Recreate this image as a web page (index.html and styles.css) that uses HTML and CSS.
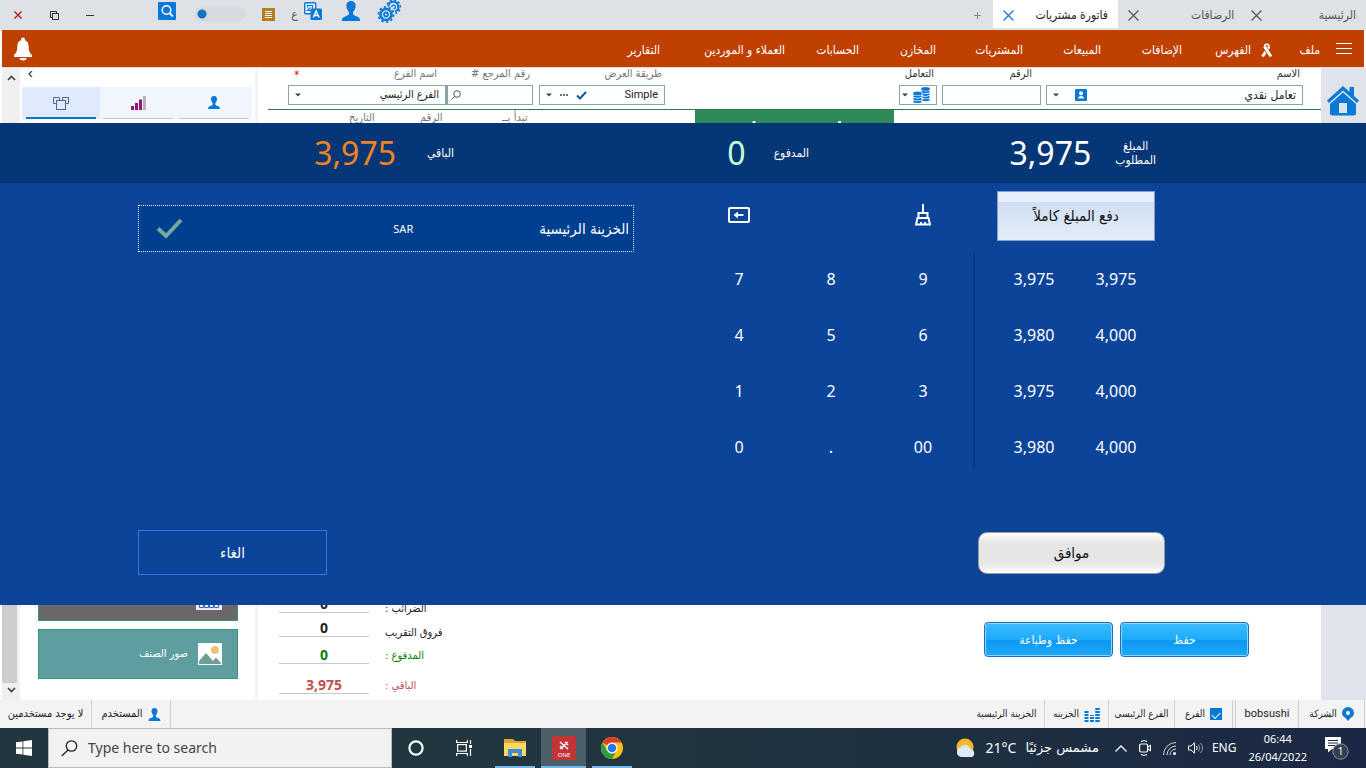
FILE: index.html
```html
<!DOCTYPE html>
<html lang="ar">
<head>
<meta charset="utf-8">
<title>فاتورة مشتريات</title>
<link rel="stylesheet" href="styles.css">
</head>
<body>
<svg width="0" height="0" class="defs" aria-hidden="true">
  <symbol id="person" viewBox="0 0 18 20"><path d="M9 0C5.800 0 4.200 2.300 4.400 5.300C4.600 7.700 5.600 9.600 6.900 10.800C7.200 12.500 7 13.800 5.500 14.500L1.500 16.300C.3 17 0 18.500 0 20H18C18 18.500 17.700 17 16.500 16.300L12.500 14.500C11 13.800 10.800 12.500 11.100 10.800C12.400 9.600 13.400 7.700 13.600 5.300C13.800 2.300 12.200 0 9 0Z" fill="#0a78d6"/></symbol>
  <symbol id="caret" viewBox="0 0 6 4"><path d="M0 .5H6L3 3.500Z" fill="#444"/></symbol>
  <symbol id="cross" viewBox="0 0 10 10"><path d="M.5.5L9.500 9.500M9.500.5L.5 9.500" stroke="currentColor" stroke-width="1.100"/></symbol>
</svg>

<header class="titlebar">
  <div class="window-buttons">
    <button class="win win-close" aria-label="إغلاق"><svg width="8" height="8" viewBox="0 0 8 8"><path d="M.5.5L7.500 7.500M7.500.5L.5 7.500" stroke="#b3272b" stroke-width="1.500"/></svg></button>
    <button class="win" aria-label="استعادة"><svg width="9" height="9" viewBox="0 0 9 9" fill="none" stroke="#333"><path d="M2.500 6.500H.5V.5H6.500V2.500"/><rect x="2.500" y="2.500" width="6" height="6"/></svg></button>
    <button class="win" aria-label="تصغير"><svg width="8" height="1" viewBox="0 0 8 1"><path d="M0 .5H8" stroke="#333"/></svg></button>
  </div>
  <div class="tools">
    <button class="tool tool-search" aria-label="بحث"><svg width="18" height="18" viewBox="0 0 18 18"><rect width="18" height="18" rx="1" fill="#0a78d6"/><circle cx="8.500" cy="8" r="4.300" fill="none" stroke="#fff" stroke-width="1.500"/><path d="M11.500 11L15 14.500" stroke="#fff" stroke-width="1.800"/></svg></button>
    <input class="switch" type="checkbox" aria-label="تبديل">
    <button class="tool tool-list" aria-label="قائمة"><svg width="13" height="13" viewBox="0 0 13 13"><rect width="13" height="13" fill="#b57e1b"/><path d="M3 3.500H10M3 5.500H10M3 7.500H10M3 9.500H10" stroke="#fff"/></svg></button>
    <button class="tool lang">ع</button>
    <button class="tool" aria-label="ترجمة"><svg width="18" height="18" viewBox="0 0 18 18"><rect x=".7" y=".7" width="11" height="11" rx="1" fill="#e8f2fa" stroke="#0a78d6" stroke-width="1.400"/><path d="M3.500 5.500V3.500H8.500V8.500H3.500L6.500 5.500" fill="none" stroke="#0a78d6" stroke-width="1.200"/><rect x="6.500" y="6.500" width="11.500" height="11.500" rx="1.500" fill="#0a78d6"/><path d="M9.300 15.500L12.200 9L15.100 15.500M10.300 13.500H14.100" fill="none" stroke="#fff" stroke-width="1.400"/></svg></button>
    <button class="tool tool-user" aria-label="المستخدم"><svg width="18" height="20"><use href="#person"/></svg></button>
    <button class="tool tool-gear" aria-label="الإعدادات"><svg width="24" height="23" viewBox="0 0 24 23" fill="none" stroke="#0a78d6"><circle cx="9" cy="14.500" r="5.500" stroke-width="2.600"/><circle cx="9" cy="14.500" r="7.600" stroke-width="1.800" stroke-dasharray="2.400 2.370"/><circle cx="9" cy="14.500" r="2" stroke-width="1.800"/><path d="M11.300 6.500A5 5 0 1 1 18 11.500" stroke-width="2"/><path d="M10.300 4.500A6.700 6.700 0 1 1 18.500 13.300" stroke-width="1.800" stroke-dasharray="2.200 2"/><path d="M14.800 7A1.800 1.800 0 1 1 16.500 8.700" stroke-width="1.400"/></svg></button>
  </div>
  <nav class="tabs" dir="rtl">
    <button class="tab tab-home">الرئيسية</button>
    <div class="tab tab-second"><button class="x" aria-label="إغلاق الرئيسية"><svg width="11" height="11"><use href="#cross"/></svg></button><button class="tab-name">الرضافات</button></div>
    <button class="x" aria-label="إغلاق الرضافات"><svg width="11" height="11"><use href="#cross"/></svg></button>
    <div class="tab tab-active"><button class="tab-name">فاتورة مشتريات</button><button class="x" aria-label="إغلاق فاتورة مشتريات"><svg width="11" height="11"><use href="#cross"/></svg></button></div>
    <button class="plus" aria-label="جديد"><svg width="7" height="7" viewBox="0 0 7 7"><path d="M3.500 0V7M0 3.500H7" stroke="#888"/></svg></button>
  </nav>
</header>

<nav class="menubar" dir="rtl">
  <button class="hamburger" aria-label="القائمة"><svg width="16" height="11" viewBox="0 0 16 11"><path d="M0 .5H16M0 5.500H16M0 10.500H16" stroke="#fff"/></svg></button>
  <button>ملف</button>
  <button class="with-icon"><svg width="13" height="15" viewBox="0 0 13 15" fill="none" stroke="#fff"><path d="M8.800 4.500C9.300 2.200 8.500 1.300 6.800 1.300S4.200 2.400 4.800 4.200" stroke-width="1.600"/><path d="M9 4L2.500 13.500" stroke-width="3"/><path d="M4.600 4L11 13.500" stroke="#bf4000" stroke-width="4.200"/><path d="M4.500 3.500L11 13.500" stroke-width="3"/></svg>الفهرس</button>
  <button>الإضافات</button>
  <button>المبيعات</button>
  <button>المشتريات</button>
  <button>المخازن</button>
  <button>الحسابات</button>
  <button>العملاء و الموردين</button>
  <button>التقارير</button>
  <button class="bell" aria-label="التنبيهات"><svg width="20" height="24" viewBox="0 0 20 24" fill="#fff"><circle cx="10" cy="2.500" r="2"/><path d="M10 3C5.500 3 4.500 6 4.300 10C4.100 14 3.500 16 1 18V20H19V18C16.500 16 15.900 14 15.700 10C15.500 6 14.500 3 10 3ZM6.500 21A3.500 2.500 0 0 0 13.500 21Z"/></svg></button>
</nav>

<main class="workspace">
  <div class="scroll">
    <svg width="9" height="6" viewBox="0 0 9 6"><path d="M1 5L4.500 1.500L8 5" fill="none" stroke="#444" stroke-width="1.700"/></svg>
    <div class="thumb"></div>
    <svg width="9" height="6" viewBox="0 0 9 6"><path d="M1 1L4.500 4.500L8 1" fill="none" stroke="#444" stroke-width="1.700"/></svg>
  </div>

  <aside class="side">
    <button class="collapse" aria-label="طي"><svg width="5" height="6" viewBox="0 0 5 6"><path d="M4 0L1 3L4 6" fill="none" stroke="#444" stroke-width="1.300"/></svg></button>
    <div class="side-tabs">
      <button class="side-tab selected" aria-label="العرض"><svg width="16" height="13" viewBox="0 0 16 13" fill="none" stroke="#4a6a8c"><path d="M3 6.500H.5V.5H6.500V3M9.500 3V.5H15.500V6.500H13"/><rect x="3.500" y="3.500" width="9" height="9"/></svg></button>
      <button class="side-tab" aria-label="إحصائيات"><svg width="15" height="14" viewBox="0 0 15 14"><path d="M0 10H3V14H0ZM4 7H7V14H4ZM8 3.500H11V14H8Z" fill="#9b1379"/><path d="M12 0H15V14H12Z" fill="#bcaec0"/></svg></button>
      <button class="side-tab" aria-label="العميل"><svg width="12" height="13"><use href="#person"/></svg></button>
    </div>
    <div class="tiles" dir="rtl">
      <button class="tile tile-dark" aria-label="حاسبة"><svg width="26" height="24" viewBox="0 0 26 24"><rect width="26" height="24" fill="#e7ecfb"/><path d="M3.500 17.500H7.500V21.500H3.500ZM8.500 17.500H12.500V21.500H8.500ZM13.500 17.500H17.500V21.500H13.500ZM18.500 17.500H22.500V21.500H18.500Z" fill="none" stroke="#3c63c8"/></svg></button>
      <button class="tile tile-teal"><svg width="24" height="22" viewBox="0 0 24 22"><rect width="24" height="22" fill="#fff"/><circle cx="17" cy="7" r="4" fill="#efc07a"/><path d="M1 21V18L8 10L15 18L18 14.500L23 20V21Z" fill="#6d9f92"/></svg><span>صور الصنف</span></button>
    </div>
  </aside>

  <section class="form">
    <div class="fields">
      <div class="field f-branch" dir="rtl">
        <div class="label-row"><label for="branch">اسم الفرع</label><b>*</b></div>
        <div class="control"><select id="branch"><option>الفرع الرئيسي</option></select><svg width="6" height="4"><use href="#caret"/></svg></div>
      </div>
      <div class="field f-ref" dir="rtl">
        <label for="ref">رقم المرجع #</label>
        <div class="control"><input id="ref" type="text"><svg width="10" height="10" viewBox="0 0 10 10" fill="none" stroke="#555"><circle cx="6" cy="4" r="3.300"/><path d="M3.500 6.500L.5 9.500"/></svg></div>
      </div>
      <div class="field f-view" dir="rtl">
        <label for="view">طريقة العرض</label>
        <div class="control"><select id="view"><option>Simple</option></select><svg width="11" height="9" viewBox="0 0 11 9"><path d="M1 4.500L4 7.500L10 1" fill="none" stroke="#17569b" stroke-width="2"/></svg><svg width="8" height="2" viewBox="0 0 8 2"><path d="M0 1H2M3 1H5M6 1H8" stroke="#444" stroke-width="1.500"/></svg><svg width="6" height="4"><use href="#caret"/></svg></div>
      </div>
      <div class="field f-deal dark" dir="rtl">
        <label for="deal">التعامل</label>
        <div class="control"><select id="deal" class="empty-select"><option></option></select><svg width="17" height="16" viewBox="0 0 17 16" fill="none" stroke="#0a78d6" stroke-width="1.900"><ellipse cx="12.500" cy="2" rx="3.500" ry="1"/><path d="M8.500 4.500Q12.500 6.300 16.500 4.500M9.500 7.200Q13 8.800 16.500 7M9.500 10Q13 11.500 16.500 9.700M9.500 12.700Q13 14 16.500 12.400"/><ellipse cx="4.500" cy="6.500" rx="3.500" ry="1"/><path d="M.5 9Q4.500 10.800 8.500 9M.5 11.700Q4.500 13.500 8.500 11.700M.5 14.300Q4.500 16 8.500 14.300"/></svg><svg width="6" height="4"><use href="#caret"/></svg></div>
      </div>
      <div class="field f-number dark" dir="rtl">
        <label for="number">الرقم</label>
        <div class="control"><input id="number" type="text"></div>
      </div>
      <div class="field f-name dark" dir="rtl">
        <label for="name">الاسم</label>
        <div class="control"><select id="name"><option>تعامل نقدي</option></select><svg class="card" width="12" height="12" viewBox="0 0 12 12"><rect width="12" height="12" rx="1" fill="#0a78d6"/><circle cx="6" cy="4.200" r="2" fill="#fff"/><path d="M3 9.500Q3 7.500 6 6.500Q9 7.500 9 9.500Z" fill="#fff"/></svg><svg width="6" height="4"><use href="#caret"/></svg></div>
      </div>
    </div>
    <div class="subhead">
      <span>التاريخ</span><span>الرقم</span><span>تبدأ بــ</span>
      <h1>فاتورة مشتريات</h1>
    </div>
    <div class="bottom">
      <dl class="totals">
        <dd>0</dd><dt class="low" dir="rtl">الضرائب :</dt>
        <dd>0</dd><dt class="low" dir="rtl">فروق التقريب</dt>
        <dd class="green">0</dd><dt class="green" dir="rtl">المدفوع :</dt>
        <dd class="red">3,975</dd><dt class="red" dir="rtl">الباقي :</dt>
      </dl>
      <div class="save-buttons"><button>حفظ وطباعة</button><button>حفظ</button></div>
    </div>
  </section>

  <aside class="home-strip"><button aria-label="الرئيسية"><svg width="32" height="31" viewBox="0 0 32 31" fill="#0a78d6"><path d="M0 15.500L16 1L22.500 7V2H27V11L32 15.500L30 18L16 5.500L2 18Z"/><path d="M3 19L16 7.500L29 19V28Q29 30.500 26.500 30.500H5.500Q3 30.500 3 28Z"/><rect x="12" y="18" width="8" height="10" fill="#dfe3ea"/></svg></button></aside>

  <section class="payment" role="dialog" aria-label="الدفع">
    <div class="summary">
      <div class="sum sum-rest"><output>3,975</output><span>الباقي</span></div>
      <div class="sum sum-paid"><output>0</output><span>المدفوع</span></div>
      <div class="sum sum-due"><output>3,975</output><span>المبلغ<br>المطلوب</span></div>
    </div>
    <div class="pay-body">
      <button class="treasury" dir="rtl"><span class="treasury-name">الخزينة الرئيسية</span><span class="currency">SAR</span><svg width="28" height="22" viewBox="0 0 28 22"><path d="M2 10.500L10 18L25 2" fill="none" stroke="#74ab9c" stroke-width="4"/></svg></button>
      <div class="keypad">
        <button class="key key-top" aria-label="مسح رقم"><svg width="22" height="16" viewBox="0 0 22 16"><rect x="1" y="1" width="20" height="14" rx="1" fill="none" stroke="#fff" stroke-width="2"/><path d="M7 8H15.500" stroke="#fff" stroke-width="2"/><path d="M5.500 8L10 4.500V11.500Z" fill="#fff"/></svg></button>
        <span></span>
        <button class="key key-top" aria-label="مسح الكل"><svg width="16" height="22" viewBox="0 0 16 22" fill="none" stroke="#fff" stroke-width="2"><path d="M8 0V9M3.500 14V9H12.500V14M2.500 14H13.500L15 20.500H1ZM6 20V18M10 20V18"/></svg></button>
        <button class="key">7</button><button class="key">8</button><button class="key">9</button>
        <button class="key">4</button><button class="key">5</button><button class="key">6</button>
        <button class="key">1</button><button class="key">2</button><button class="key">3</button>
        <button class="key">0</button><button class="key">.</button><button class="key">00</button>
      </div>
      <div class="amounts">
        <div class="full-row"><button class="full" dir="rtl">دفع المبلغ كاملاً</button></div>
        <div class="amount-grid">
          <button class="key">3,975</button><button class="key">3,975</button>
          <button class="key">3,980</button><button class="key">4,000</button>
          <button class="key">3,975</button><button class="key">4,000</button>
          <button class="key">3,980</button><button class="key">4,000</button>
        </div>
      </div>
    </div>
    <div class="pay-actions"><button class="cancel">الغاء</button><button class="ok">موافق</button></div>
  </section>
</main>

<footer class="statusbar">
  <span class="cell c-users">لا يوجد مستخدمين</span>
  <span class="cell c-user">المستخدم<svg width="13" height="13"><use href="#person"/></svg></span>
  <span class="grow"></span>
  <span class="cell c-safe-name">الخزينة الرئيسية</span>
  <span class="cell c-safe">الخزينه<svg width="16" height="15" viewBox="0 0 16 15" fill="none" stroke="#0a78d6" stroke-dasharray="2 1"><path d="M2.500 15V3M8 15V8" stroke-width="4"/><path d="M13.500 15V0" stroke-width="4.500"/></svg></span>
  <span class="cell c-branch-name">الفرع الرئيسى</span>
  <span class="cell c-branch"><label for="branch-on">الفرع</label><input id="branch-on" type="checkbox" checked></span>
  <span class="cell c-company-name">bobsushi</span>
  <span class="cell c-company">الشركة<svg width="12" height="14" viewBox="0 0 12 14"><path d="M6 0A6 6 0 0 1 12 6Q12 9 8.500 11L6 14L3.500 11Q0 9 0 6A6 6 0 0 1 6 0Z" fill="#0a78d6"/><circle cx="6" cy="6" r="2" fill="#fff"/></svg></span>
</footer>

<footer class="taskbar" lang="en">
  <button class="start" aria-label="Start"><svg width="16" height="16" viewBox="0 0 16 16" fill="#fff"><path d="M0 2.300L6.500 1.400V7.600H0ZM7.300 1.300L16 0V7.600H7.300ZM0 8.400H6.500V14.600L0 13.700ZM7.300 8.400H16V16L7.300 14.700Z"/></svg></button>
  <label class="search"><svg width="17" height="17" viewBox="0 0 17 17" fill="none" stroke="#222" stroke-width="1.300"><circle cx="10.500" cy="6" r="5.200"/><path d="M7 10L.7 16"/></svg><input type="text" placeholder="Type here to search" aria-label="Type here to search"></label>
  <button class="task" aria-label="Cortana"><svg width="16" height="16" viewBox="0 0 16 16"><circle cx="8" cy="8" r="6.600" fill="none" stroke="#fff" stroke-width="2.200"/></svg></button>
  <button class="task" aria-label="Task view"><svg width="17" height="16" viewBox="0 0 17 16" fill="none" stroke="#fff" stroke-width="1.200"><path d="M.6 0V2.500H11.400V0M.6 16V13.500H11.400V16M14.500 0V4M14.500 9V16"/><rect x="1.600" y="4.600" width="8.800" height="6.500"/><path d="M13 6.500H16" stroke-width="3"/></svg></button>
  <div class="apps">
    <button class="task app" aria-label="Explorer"><svg width="22" height="18" viewBox="0 0 22 18"><path d="M0 0H9L11 2H22V17H0Z" fill="#e0a42e"/><path d="M0 4H22V17H0Z" fill="#fbd768"/><path d="M4 18V10H18V18H14V14H8V18Z" fill="#3c8fd3"/></svg></button>
    <button class="task app active" aria-label="ONE"><svg width="24" height="24" viewBox="0 0 24 24"><rect width="24" height="24" rx="1" fill="#c23436"/><path d="M8 6L16 13M8 10L11 13M13 6L16 9M16 6L8 13" stroke="#fff" stroke-width="1.400"/><text x="12" y="21" fill="#fff" font-size="6" text-anchor="middle">ONE</text></svg></button>
    <button class="task app" aria-label="Chrome"><svg width="22" height="22" viewBox="0 0 22 22"><circle cx="11" cy="11" r="11" fill="#fbc116"/><path d="M11 11L1.500 5.500A11 11 0 0 1 20.500 5.500H11Z" fill="#df3c2f"/><path d="M11 22A11 11 0 0 1 1.500 5.500L6.200 13.700L11 16L15 14.500Z" fill="#2d9b48"/><circle cx="11" cy="11" r="5.500" fill="#fff"/><circle cx="11" cy="11" r="4.300" fill="#2f77e5"/></svg></button>
  </div>
  <span class="grow"></span>
  <button class="weather"><svg width="22" height="20" viewBox="0 0 22 20"><circle cx="10" cy="9" r="8.500" fill="#f9b92c"/><path d="M6 19A5 5 0 0 1 5 9.500A6 6 0 0 1 15.500 11A4.300 4.300 0 0 1 17 19Z" fill="#dcebf8"/></svg><span>21°C</span><span class="weather-text" dir="rtl">مشمس جزئيًا</span></button>
  <div class="tray">
    <svg width="12" height="7" viewBox="0 0 12 7"><path d="M.5 6.500L6 1L11.500 6.500" fill="none" stroke="#fff" stroke-width="1.300"/></svg>
    <svg width="12" height="16" viewBox="0 0 12 16" fill="none" stroke="#fff" stroke-width="1.200"><rect x=".6" y="4" width="8" height="8" rx="1.500"/><path d="M8.600 7L11.500 5.500V10.500L8.600 9M2 1.500Q5 0 8 1.500M2 14.500Q5 16 8 14.500"/></svg>
    <svg width="13" height="13" viewBox="0 0 13 13" fill="none" stroke="#cdd3da"><path d="M.5 13A12.500 12.500 0 0 1 13 .5M4 13A9 9 0 0 1 13 4M7 13A6 6 0 0 1 13 7"/><circle cx="11.500" cy="11.500" r="1.500" fill="#fff" stroke="none"/></svg>
    <svg width="16" height="12" viewBox="0 0 16 12" fill="none" stroke="#fff"><path d="M.5 4H3L6.500 .8V11.200L3 8H.5Z"/><path d="M8.500 4Q10 6 8.500 8"/><path d="M10.500 2.500Q13 6 10.500 9.500M12.500 1Q16.500 6 12.500 11" stroke="#8b97a5"/></svg>
  </div>
  <span class="eng">ENG</span>
  <time class="clock">06:44<br>26/04/2022</time>
  <button class="notify" aria-label="Notifications"><svg width="24" height="24" viewBox="0 0 24 24"><path d="M0 1H16V13H7L3 16.500V13H0Z" fill="#fff"/><path d="M3 4.500H13M3 7H13M3 9.500H10" stroke="#1d2b3e"/><circle cx="15.500" cy="15.500" r="7.700" fill="#33404d" stroke="#8d949c"/><text x="15.500" y="19" fill="#fff" font-size="10" text-anchor="middle">1</text></svg></button>
</footer>
</body>
</html>
```
FILE: styles.css
```css
* { box-sizing: border-box; }

body {
  margin: 0;
  min-height: 100vh;
  display: flex;
  flex-direction: column;
  font: 11px/14px "DejaVu Sans Condensed", "DejaVu Sans", sans-serif;
  color: #222;
  background: #fff;
}

button, input, select {
  font: inherit;
  color: inherit;
  margin: 0;
  padding: 0;
  border: 0;
  background: none;
}

svg { display: block; flex: none; }
.defs { position: absolute; }
.grow { flex: 1; }
.green { color: #0b800b; }
.red { color: #c0504d; }

/* Title bar */
.titlebar {
  height: 30px;
  display: flex;
  background: #dee1e6;
}
.window-buttons { display: flex; align-items: center; }
.win { width: 36px; height: 30px; display: grid; place-items: center; }
.tools { display: flex; align-items: center; margin-left: 50px; height: 22px; }
.switch {
  appearance: none;
  width: 50px;
  height: 16px;
  margin: 6px 17px 0 19px;
  border-radius: 8px;
  background: radial-gradient(circle at 7px 8px, #1173c4 4px, transparent 5px), #d6dae1;
}
.tool-list { padding-top: 6px; }
.lang { margin: 6px 6px 0 16px; width: 7px; font-size: 12px; color: #555; }
.tool-user { margin-left: 20px; }
.tool-gear { margin-left: 17px; }
.tabs { display: flex; margin-left: auto; color: #555; font-size: 12px; }
.tabs button { display: flex; align-items: center; white-space: nowrap; }
.tab { height: 30px; display: flex; align-items: center; justify-content: space-between; }
.tab-home { padding-right: 10px; width: 104px; }
.tab-second { width: 71px; margin-left: 52px; }
.tabs > .x { margin-left: 10px; }
.tab-active {
  width: 125px;
  height: 28px;
  padding: 2px 10px 0;
  background: #fff;
  color: #222;
}
.tab-active .x { color: #1173c4; }
.plus { padding: 0 12px; }

/* Menu bar */
.menubar {
  height: 38px;
  margin: 0 2px;
  padding: 3px 12px 0 11px;
  display: grid;
  grid-template-columns: 32px 47px 91px 81px 78px 87px 77px 74px 125px 1fr auto;
  align-items: center;
  background: #bf4000;
  color: #fff;
  border-bottom: 1px solid #f0d8cb;
  font-size: 12px;
}
.menubar button { text-align: right; white-space: nowrap; }
.menubar .with-icon { display: flex; align-items: center; gap: 9px; }
.hamburger, .bell { padding-bottom: 3px; }

/* Workspace */
.workspace {
  position: relative;
  flex: 1;
  min-height: 560px;
  display: flex;
}
.scroll {
  width: 18px;
  margin-left: 2px;
  padding: 7px 0;
  display: flex;
  flex-direction: column;
  align-items: center;
  gap: 4px;
  background: #f0f0f0;
}
.thumb { flex: 1; width: 15px; margin: 90px 3px 0 0; background: #cdcdcd; }
.side {
  width: 238px;
  display: flex;
  flex-direction: column;
  padding: 0 3px 21px 2px;
  border-right: 3px solid #f3f4f6;
}
.collapse { width: 18px; height: 19px; padding: 3px 0 0 6px; display: flex; align-items: flex-start; }
.side-tabs { display: grid; grid-template-columns: 78px 1fr 1fr; background: #f1f6fd; }
.side-tab {
  height: 32px;
  margin: 0 3px;
  display: grid;
  place-items: center;
  border-bottom: 1px solid #aecbf0;
}
.side-tab.selected {
  margin: 0;
  background: linear-gradient(#1173c4, #1173c4) 4px 100% / 70px 2px no-repeat, #dfeafd;
  border: 0;
}
.tiles { margin-top: auto; padding: 0 14px 0 16px; }
.tile {
  width: 100%;
  height: 50px;
  display: flex;
  align-items: center;
  gap: 10px;
  padding: 0 15px;
  border: 1px solid #2f9c6c;
  color: #fff;
}
.tile-dark { margin-bottom: 8px; background: #696767; padding-top: 4px; }
.tile-teal { background: #5f9ea0; }

.form { flex: 1; display: flex; flex-direction: column; padding-left: 10px; min-width: 0; }
.fields {
  display: grid;
  grid-template-columns: 158px 87px 6px 126px 1fr 38px 5px 99px 5px 257px;
  padding: 0 18px 4px 20px;
  border-bottom: 1px solid #2e7d4f;
}
.f-view { grid-column: 4; }
.f-deal { grid-column: 6; }
.f-number { grid-column: 8; }
.f-name { grid-column: 10; }
.field label { display: block; color: #777; padding-right: 3px; line-height: 12px; height: 17px; white-space: nowrap; }
.field.dark label { color: #333; }
.label-row { display: flex; justify-content: space-between; padding: 0 6px; }
.label-row b { color: #e21b1b; font-size: 12px; font-weight: 400; }
.control {
  height: 20px;
  display: flex;
  align-items: center;
  gap: 8px;
  padding: 0 6px;
  border: 1px solid #8aa5a8;
}
.control input, .control select { flex: 1; min-width: 0; appearance: none; outline: 0; }
.f-ref .control { border-left-width: 2px; padding: 0 3px; }
.f-deal .control { padding: 0 1px 0 5px; gap: 5px; }
.f-number label { padding-right: 9px; }
.control .card { margin-left: 8px; }
#name { font-size: 12px; }
#view { font: 11px/14px Roboto, sans-serif; }

.subhead { display: flex; color: #777; line-height: 16px; height: 40px; }
.subhead span { width: 71px; }
.subhead span:first-child { margin-left: 81px; }
.subhead span:nth-child(2) { width: 82px; }
.subhead h1 {
  width: 199px;
  margin: 0 0 0 122px;
  padding-top: 8px;
  text-align: center;
  font-size: 16px;
  line-height: 20px;
  color: #fff;
  background: #2e8b57;
}
.bottom { flex: 1; display: flex; align-items: flex-end; justify-content: space-between; padding: 0 72px 6px 11px; }
.totals {
  margin: 0;
  display: grid;
  grid-template-columns: 90px auto;
  grid-template-rows: 24px 24px 27px 30px;
  column-gap: 16px;
}
.totals dd {
  margin: 0;
  display: flex;
  align-items: flex-end;
  justify-content: center;
  border-bottom: 1px solid #c9c9c9;
  font: bold 14px/16px "Noto Sans", sans-serif;
}
.totals dt { align-self: end; justify-self: start; line-height: 16px; }
.totals .low { margin-bottom: -4px; }
.save-buttons { display: flex; gap: 7px; padding-bottom: 37px; }
.save-buttons button {
  width: 129px;
  height: 35px;
  border: 1px solid #1b6fc0;
  border-radius: 4px;
  box-shadow: inset 0 0 0 1px #8fd6ff;
  background: linear-gradient(#3dbcff, #1eabfb 50%, #0d98f3 52%, #1ba8f8);
  color: #fff;
  font-size: 12px;
}
.home-strip { width: 45px; padding: 17px 6px; background: #dfe3ea; }

/* Payment dialog */
.payment {
  position: absolute;
  left: 0;
  right: 0;
  top: 55px;
  bottom: 95px;
  display: flex;
  flex-direction: column;
  background: #0b4499;
  color: #fff;
}
.summary {
  height: 60px;
  display: grid;
  grid-template-columns: 1fr 355px 347px;
  padding-right: 210px;
  background: #053676;
}
.sum { display: flex; align-items: center; justify-content: flex-end; gap: 24px; text-align: center; font-size: 12px; }
.sum output { font: 32px/40px "Noto Sans", sans-serif; }
.sum-rest { gap: 31px; }
.sum-paid { gap: 28px; }
.sum-rest output { color: #f58220; }
.sum-paid output { color: #c8ffd8; }
.pay-body {
  flex: 1;
  display: grid;
  grid-template-columns: 1fr 280px 192px;
  align-items: start;
  padding: 0 201px 0 138px;
}
.treasury {
  margin: 22px 59px 0 0;
  height: 47px;
  padding: 0 4px 0 17px;
  display: grid;
  grid-template-columns: 10fr auto 11fr;
  align-items: center;
  justify-items: start;
  border: 1px dotted #fff;
  background: #003e8f;
}
.treasury-name { font-size: 15px; line-height: 20px; }
.currency { font: 11px/14px "Noto Sans", sans-serif; }
.treasury svg { justify-self: end; }
.keypad { display: grid; grid-template-columns: repeat(3, 92px); grid-template-rows: 68px repeat(4, 56px); }
.key { display: grid; place-items: center; font: 16px/20px "Noto Sans", sans-serif; }
.key-top { padding-bottom: 4px; }
.full-row { height: 68px; padding: 8px 0 0 24px; }
.full {
  width: 158px;
  height: 50px;
  border: 1px solid #7f9fd0;
  background: linear-gradient(#e6effb 20%, #cfdff2 21%, #e3edf9);
  color: #111;
  font-size: 15px;
}
.amount-grid {
  display: grid;
  grid-template-columns: 82px 82px;
  grid-auto-rows: 56px;
  padding-left: 20px;
  background: linear-gradient(#053b8b, #053b8b) 0 2px / 2px 218px no-repeat;
}
.pay-actions { display: flex; align-items: center; justify-content: space-between; padding: 0 201px 30px 138px; font-size: 15px; }
.cancel { width: 189px; height: 45px; border: 1px solid #2f77e0; }
.ok {
  width: 187px;
  height: 42px;
  border: 1px solid #9a9a9a;
  border-radius: 9px;
  background: linear-gradient(#fff, #e6e6e6 25%, #e6e6e6 75%, #fff);
  color: #111;
}

/* Status bar */
.statusbar { height: 28px; display: flex; background: #f3f3f3; font-size: 10px; }
.cell {
  display: flex;
  align-items: center;
  justify-content: center;
  gap: 5px;
  border-right: 1px solid #d0d0d0;
  white-space: nowrap;
}
.c-users { width: 92px; font-size: 11px; }
.c-user { width: 79px; font-size: 11px; }
.c-safe-name { width: 76px; }
.c-safe { width: 64px; }
.c-branch-name { width: 66px; }
.c-branch { width: 58px; }
.c-company-name { width: 64px; border-left: 1px solid #d0d0d0; margin-left: 2px; font: 11px/14px Roboto, sans-serif; }
.c-company { width: 66px; margin-right: 1px; }
.cell input {
  appearance: none;
  width: 12px;
  height: 12px;
  background: #0a78d6;
  display: grid;
  place-items: center;
}
.cell input:checked::before {
  content: "";
  width: 7px;
  height: 4px;
  border: solid #fff;
  border-width: 0 0 1px 1px;
  transform: rotate(-45deg);
}

/* Taskbar */
.taskbar {
  height: 40px;
  display: flex;
  align-items: center;
  background: linear-gradient(90deg, #22363f 40%, #1e3040 70%, #1b2845);
  color: #fff;
  font: 12px/18px "Noto Sans", sans-serif;
}
.start { width: 48px; height: 40px; display: grid; place-items: center; }
.search {
  width: 344px;
  height: 40px;
  padding: 0 12px;
  display: flex;
  align-items: center;
  gap: 10px;
  background: #f2f2f2;
  border: 1px solid #b9bcbe;
}
.search input { flex: 1; min-width: 0; font-size: 14px; outline: 0; }
.search input::placeholder { color: #444; opacity: 1; }
.task { width: 48px; height: 40px; display: grid; place-items: center; }
.apps { display: flex; gap: 2px; margin-left: 3px; }
.app { background: linear-gradient(#76b9ed, #76b9ed) 50% 100% / 40px 2px no-repeat; }
.app.active { width: 45px; background-color: #4c5f66; background-size: 100% 2px; }
.weather { display: flex; align-items: center; gap: 9px; font-size: 14px; }
.weather-text { font: 13px/18px "DejaVu Sans", sans-serif; }
.tray { display: flex; align-items: center; gap: 12px; margin-left: 16px; }
.eng { margin-left: 8px; }
.clock { margin-left: 12px; text-align: center; font-size: 11px; }
.notify { margin: 0 17px 0 18px; }
```
